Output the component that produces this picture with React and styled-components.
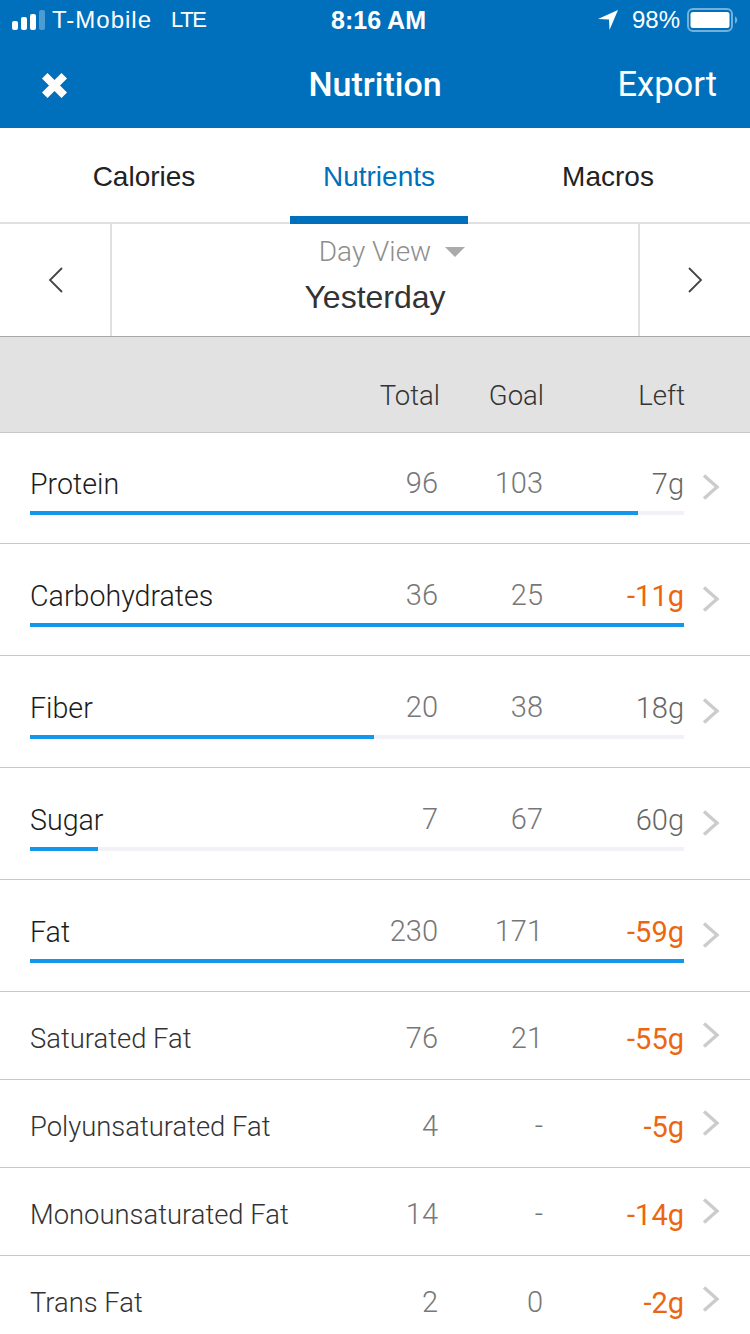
import React from 'react';
import styled, { createGlobalStyle } from 'styled-components';

const lightFont = `Roboto, "Liberation Sans", Arial, sans-serif`;

const Global = createGlobalStyle`
  html, body { margin: 0; padding: 0; background: #fff; }
  body { font-family: "Liberation Sans", Arial, sans-serif; }
`;

const Page = styled.div`
  width: 750px;
  height: 1334px;
  overflow: hidden;
  background: #fff;
`;

const Header = styled.header`
  background: #0070bc;
  color: #fff;
  height: 128px;
`;

const StatusBar = styled.div`
  height: 40px;
  display: grid;
  grid-template-columns: 1fr auto 1fr;
  align-items: center;
  padding: 0 11px 0 12px;
  font-size: 24px;
`;

const StatusLeft = styled.div`
  display: flex;
  align-items: center;
  gap: 7px;
`;

const StatusRight = styled.div`
  display: flex;
  align-items: center;
  justify-content: flex-end;
`;

const Carrier = styled.span`
  letter-spacing: 1px;
  margin-right: 12px;
`;

const Network = styled.span`
  font-size: 22px;
  letter-spacing: -1.4px;
`;

const Clock = styled.span`
  font-weight: 700;
  font-size: 25px;
  margin-left: 6px;
`;

const Percent = styled.span`
  margin: 0 7px 0 14px;
`;

const NavBar = styled.div`
  height: 88px;
  display: grid;
  grid-template-columns: 1fr auto 1fr;
  align-items: center;
  padding: 2px 33px 0;
  box-sizing: border-box;
`;

const CloseBox = styled.div`
  display: flex;
  padding: 1px 0 0 9px;
`;

const NavTitle = styled.div`
  font-family: ${lightFont};
  font-size: 34px;
  font-weight: 500;
  margin-top: -2px;
`;

const NavAction = styled.div`
  font-family: ${lightFont};
  font-weight: 400;
  font-size: 34.5px;
  text-align: right;
  margin-top: -2px;
`;

const Tabs = styled.nav`
  height: 96px;
  box-sizing: border-box;
  display: flex;
  padding-left: 54px;
  border-bottom: 2px solid #e0e0e0;
`;

const Tab = styled.div`
  width: ${({ $w }) => $w}px;
  margin-left: ${({ $ml }) => $ml || 0}px;
  height: 96px;
  box-sizing: border-box;
  display: flex;
  align-items: center;
  justify-content: center;
  padding-top: 10px;
  font-size: 28px;
  color: ${({ $active }) => ($active ? '#0070bc' : '#222')};
  border-bottom: 8px solid ${({ $active }) => ($active ? '#0070bc' : 'transparent')};
`;

const DateRow = styled.div`
  height: 113px;
  box-sizing: border-box;
  display: grid;
  grid-template-columns: 112px 1fr 112px;
  border-bottom: 1px solid #a8a8a8;
`;

const Arrow = styled.div`
  display: flex;
  align-items: center;
  justify-content: center;
  border-style: solid;
  border-color: #e0e0e0;
  border-width: ${({ $side }) => ($side === 'left' ? '0 2px 0 0' : '0 0 0 2px')};
`;

const DateCenter = styled.div`
  display: flex;
  flex-direction: column;
  align-items: center;
  padding-top: 11px;
  gap: 10px;
`;

const ViewPicker = styled.div`
  position: relative;
  font-family: ${lightFont};
  font-weight: 300;
  font-size: 28px;
  line-height: 34px;
  color: #8e8e8e;
`;

const Caret = styled.span`
  position: absolute;
  left: calc(100% + 14px);
  top: 12px;
  width: 0;
  height: 0;
  border-left: 10px solid transparent;
  border-right: 10px solid transparent;
  border-top: 10px solid #aaa;
`;

const DayName = styled.div`
  font-size: 32px;
  color: #333;
`;

const ColumnHead = styled.div`
  height: 96px;
  box-sizing: border-box;
  background: #e2e2e2;
  border-bottom: 1px solid #c8c8c8;
  padding: 42px 65px 0 30px;
  display: grid;
  grid-template-columns: 1fr 110px 104px 141px;
  font-family: ${lightFont};
  font-weight: 300;
  font-size: 27.5px;
  color: #333;
  text-align: right;
`;

const HeadCell = styled.div`
  line-height: 34px;
`;

const RowList = styled.div`
  margin-top: -1px;
`;

const Row = styled.div`
  height: ${({ $major }) => ($major ? 112 : 88)}px;
  box-sizing: border-box;
  border-bottom: 1px solid #c8c8c8;
  padding: ${({ $major }) => ($major ? '34px' : '29px')} 0 0 30px;
  display: grid;
  grid-template-columns: 654px 66px;
  align-items: start;
`;

const RowMain = styled.div`
  display: flex;
  flex-direction: column;
  gap: 9px;
`;

const Cells = styled.div`
  display: grid;
  grid-template-columns: 1fr 110px 105px 141px;
  align-items: center;
  height: 36px;
  text-align: right;
  font-family: ${lightFont};
  font-weight: 300;
`;

const Name = styled.div`
  text-align: left;
  font-size: ${({ $major }) => ($major ? 28.6 : 27.4)}px;
  color: ${({ $major }) => ($major ? '#1c1c1c' : '#333')};
`;

const Num = styled.div`
  font-size: 29px;
  color: #777;
  margin-top: -3px;
`;

const Left = styled.div`
  font-size: 29px;
  font-weight: ${({ $over }) => ($over ? 400 : 300)};
  color: ${({ $over }) => ($over ? '#ec6612' : '#666')};
`;

const Track = styled.div`
  height: 4px;
  background: #f1f1f6;
`;

const Fill = styled.div`
  height: 100%;
  background: #1496ec;
`;

const Chevron = styled.div`
  display: flex;
  justify-content: flex-end;
  padding-right: 30px;
  padding-top: ${({ $major }) => ($major ? 8 : 1)}px;
`;

const rows = [
  { name: 'Protein', total: '96', goal: '103', left: '7g', pct: 93, major: true },
  { name: 'Carbohydrates', total: '36', goal: '25', left: '-11g', pct: 100, major: true },
  { name: 'Fiber', total: '20', goal: '38', left: '18g', pct: 52.6, major: true },
  { name: 'Sugar', total: '7', goal: '67', left: '60g', pct: 10.4, major: true },
  { name: 'Fat', total: '230', goal: '171', left: '-59g', pct: 100, major: true },
  { name: 'Saturated Fat', total: '76', goal: '21', left: '-55g' },
  { name: 'Polyunsaturated Fat', total: '4', goal: '-', left: '-5g' },
  { name: 'Monounsaturated Fat', total: '14', goal: '-', left: '-14g' },
  { name: 'Trans Fat', total: '2', goal: '0', left: '-2g' },
];

const SignalIcon = () => (
  <svg width="33" height="20" viewBox="0 0 33 20" fill="#fff">
    <rect x="0" y="11" width="6" height="9" rx="2" />
    <rect x="9" y="7" width="6" height="13" rx="2" />
    <rect x="18" y="4" width="6" height="16" rx="2" />
    <rect x="27" y="0" width="6" height="20" rx="2" opacity="0.3" />
  </svg>
);

const LocationIcon = () => (
  <svg width="20" height="20" viewBox="0 0 20 20" fill="#fff">
    <path d="M20 0 L0 9 L11 9.5 L11.5 20 Z" />
  </svg>
);

const BatteryIcon = () => (
  <svg width="52" height="24" viewBox="0 0 52 24">
    <rect x="1" y="1" width="44" height="22" rx="5" fill="none" stroke="#fff" strokeOpacity="0.45" strokeWidth="2" />
    <rect x="3.5" y="4" width="39" height="16" rx="2.5" fill="#fff" />
    <path d="M48 8.5 C51 9.5 51 14.5 48 15.5 Z" fill="#fff" fillOpacity="0.45" />
  </svg>
);

const CloseIcon = () => (
  <svg width="25" height="25" viewBox="0 0 25 25" fill="#fff">
    <path d="M5.5 0 L12.5 7 L19.5 0 L25 5.5 L18 12.5 L25 19.5 L19.5 25 L12.5 18 L5.5 25 L0 19.5 L7 12.5 L0 5.5 Z" />
  </svg>
);

const ArrowIcon = ({ dir }) => (
  <svg width="15" height="26" viewBox="0 0 15 26" fill="none" stroke="#444" strokeWidth="1.8">
    <path d={dir === 'left' ? 'M14 1 L2 13 L14 25' : 'M1 1 L13 13 L1 25'} />
  </svg>
);

const RowChevron = () => (
  <svg width="18" height="26" viewBox="0 0 18 26" fill="none" stroke="#cccccd" strokeWidth="3.4">
    <path d="M2 1.5 L15 13 L2 24.5" />
  </svg>
);

export default function App() {
  return (
    <Page>
      <Global />
      <Header>
        <StatusBar>
          <StatusLeft>
            <SignalIcon />
            <Carrier>T-Mobile</Carrier>
            <Network>LTE</Network>
          </StatusLeft>
          <Clock>8:16 AM</Clock>
          <StatusRight>
            <LocationIcon />
            <Percent>98%</Percent>
            <BatteryIcon />
          </StatusRight>
        </StatusBar>
        <NavBar>
          <CloseBox><CloseIcon /></CloseBox>
          <NavTitle>Nutrition</NavTitle>
          <NavAction>Export</NavAction>
        </NavBar>
      </Header>
      <Tabs>
        <Tab $w={180}>Calories</Tab>
        <Tab $w={178} $ml={56} $active>Nutrients</Tab>
        <Tab $w={180} $ml={50}>Macros</Tab>
      </Tabs>
      <DateRow>
        <Arrow $side="left"><ArrowIcon dir="left" /></Arrow>
        <DateCenter>
          <ViewPicker>Day View<Caret /></ViewPicker>
          <DayName>Yesterday</DayName>
        </DateCenter>
        <Arrow $side="right"><ArrowIcon dir="right" /></Arrow>
      </DateRow>
      <ColumnHead>
        <div />
        <HeadCell>Total</HeadCell>
        <HeadCell>Goal</HeadCell>
        <HeadCell>Left</HeadCell>
      </ColumnHead>
      <RowList>
        {rows.map((r) => (
          <Row key={r.name} $major={r.major}>
            <RowMain>
              <Cells>
                <Name $major={r.major}>{r.name}</Name>
                <Num>{r.total}</Num>
                <Num>{r.goal}</Num>
                <Left $over={r.left.startsWith('-')}>{r.left}</Left>
              </Cells>
              {r.major && (
                <Track>
                  <Fill style={{ width: `${r.pct}%` }} />
                </Track>
              )}
            </RowMain>
            <Chevron $major={r.major}><RowChevron /></Chevron>
          </Row>
        ))}
      </RowList>
    </Page>
  );
}
